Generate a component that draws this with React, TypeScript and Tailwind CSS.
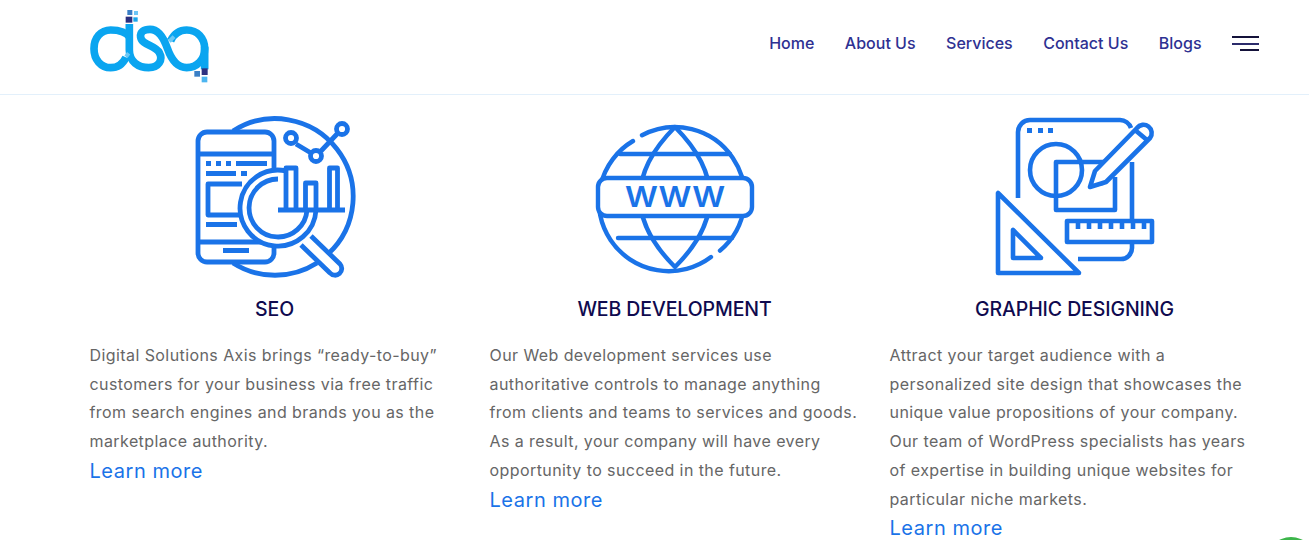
const navLinks = ["Home", "About Us", "Services", "Contact Us", "Blogs"];

const Logo = () => (
  <svg width="160" height="94" viewBox="0 0 480 282" fill="none">
    <g stroke="#0aa5f0" strokeWidth="23">
      <path d="M168 172C158 193 142 203 122 203C92 203 72 178 72 146C72 114 92 90 122 90C145 90 168 96 180 112" />
      <path d="M178 72V150C178 185 205 203 236 203C266 203 280 180 268 158C256 136 216 135 212 112C209 96 222 88 240 88C262 88 280 110 292 145C305 182 322 203 350 203C382 203 404 178 404 146C404 114 382 90 350 90C330 90 312 102 302 122" />
      <path d="M404 140V208" />
    </g>
    <path d="M298 124L312 110M168 170L176 160" stroke="#6cc8f5" strokeWidth="12" />
    <rect x="172" y="30" width="15" height="15" fill="#3a7fc6" />
    <rect x="192" y="33" width="12" height="12" fill="#6cc5f5" />
    <rect x="167" y="50" width="20" height="18" fill="#2b2f7f" />
    <rect x="190" y="52" width="13" height="13" fill="#1aa5ea" />
    <rect x="395" y="205" width="18" height="20" fill="#2e3180" />
    <rect x="373" y="213" width="17" height="17" fill="#3a7fc6" />
    <rect x="395" y="230" width="17" height="17" fill="#4db5f0" />
  </svg>
);

const SeoIcon = () => (
  <svg width="190" height="180" viewBox="0 0 190 180" fill="none" stroke="#1a73e8" strokeWidth="4.8" strokeLinejoin="round">
    <path d="M53 26A78 78 0 0 1 148 149M137 158A78 78 0 0 1 53 158" />
    <path d="M94 63V36A9 9 0 0 0 85 27H27A9 9 0 0 0 18 36V148A9 9 0 0 0 27 157H85A9 9 0 0 0 94 148V139" />
    <path d="M18 49H94M18 137H112" />
    <path d="M62 79H28V110H62" />
    <g fill="#1a73e8" stroke="none">
      <rect x="26" y="56" width="5" height="5" />
      <rect x="36" y="56" width="5" height="5" />
      <rect x="46" y="56" width="5" height="5" />
      <rect x="56" y="56" width="31" height="5" />
      <rect x="26" y="66" width="30" height="5" />
      <rect x="61" y="66" width="6" height="5" />
      <rect x="26" y="117" width="31" height="5" />
      <rect x="43" y="143" width="26" height="5" />
    </g>
    <path d="M106 65.9A38 38 0 1 0 136 105" fill="#fff" />
    <path d="M98 74A29 29 0 1 0 127 105" />
    <path d="M106 105V63H116V105M125.5 105V78H136V105M149.5 105V63H157.5V105" />
    <path d="M98 105H165" />
    <path d="M131 131L160 159A6.5 6.5 0 0 1 150 168L121 140" fill="#fff" />
    <path d="M116 39L131 48M141 46L157 29" />
    <circle cx="111" cy="33" r="5.5" fill="#fff" />
    <circle cx="136" cy="51" r="5.5" fill="#fff" />
    <circle cx="162" cy="24" r="5.5" fill="#fff" />
  </svg>
);

const WebIcon = () => (
  <svg width="190" height="180" viewBox="0 -5 190 180" fill="none" stroke="#1a73e8" strokeWidth="4.4" strokeLinecap="round" strokeLinejoin="round">
    <path d="M62 25.3A70 70 0 0 1 140 140.6M131 147A70 70 0 1 1 53 31" />
    <path d="M95 17Q25 87 95 157Q165 87 95 17Z" />
    <path d="M40 44H150M38 128H152" />
    <rect x="18" y="68" width="154" height="38" rx="9" fill="#fff" />
    <text x="45" y="97" textLength="100" lengthAdjust="spacingAndGlyphs" fill="#1a73e8" stroke="none" fontFamily="Inter, sans-serif" fontSize="28" fontWeight="600">WWW</text>
  </svg>
);

const DesignIcon = () => (
  <svg width="190" height="180" viewBox="0 0 190 180" fill="none" stroke="#1a73e8" strokeWidth="4.6" strokeLinejoin="round">
    <path d="M38 93V27A12 12 0 0 1 50 15H140A12 12 0 0 1 151 23M152 57V114M152 138V143A11 11 0 0 1 141 154H98" />
    <g fill="#1a73e8" stroke="none">
      <rect x="47" y="23" width="5" height="5" />
      <rect x="58" y="23" width="5" height="5" />
      <rect x="68" y="23" width="5" height="5" />
      <path d="M110 83L114 72L124 80Z" />
    </g>
    <circle cx="76" cy="65" r="26" />
    <path d="M128 57H76V105H135V72" />
    <path d="M110 82L115 66L157 23A8 8 0 0 1 170 33L126 77Z" fill="#fff" />
    <path d="M155 25L167 35" />
    <path d="M87 116H172V137H87ZM98 116V124M109 116V124M120 116V124M131 116V124M142 116V124M153 116V124M164 116V124" />
    <path d="M18 88V168H99Z" />
    <path d="M33 125V153H61Z" />
  </svg>
);

const services = [
  {
    title: "SEO",
    icon: <SeoIcon />,
    lines: [
      "Digital Solutions Axis brings “ready-to-buy”",
      "customers for your business via free traffic",
      "from search engines and brands you as the",
      "marketplace authority.",
    ],
  },
  {
    title: "WEB DEVELOPMENT",
    icon: <WebIcon />,
    lines: [
      "Our Web development services use",
      "authoritative controls to manage anything",
      "from clients and teams to services and goods.",
      "As a result, your company will have every",
      "opportunity to succeed in the future.",
    ],
  },
  {
    title: "GRAPHIC DESIGNING",
    icon: <DesignIcon />,
    lines: [
      "Attract your target audience with a",
      "personalized site design that showcases the",
      "unique value propositions of your company.",
      "Our team of WordPress specialists has years",
      "of expertise in building unique websites for",
      "particular niche markets.",
    ],
  },
];

export default function App() {
  return (
    <div className="relative h-[540px] overflow-hidden bg-white font-['Inter',sans-serif]">
      {/* Header */}
      <header className="flex h-[95px] items-center justify-between border-b border-[#e3f0fb] pl-[70px] pr-[50px]">
        <Logo />
        <div className="mb-[7px] flex items-center gap-[30.5px]">
          <nav className="flex items-center gap-[30.5px] pb-[2px]">
            {navLinks.map((link) => (
              <a key={link} className="text-[16px] font-medium text-[#2e3192]">
                {link}
              </a>
            ))}
          </nav>
          <div className="flex w-[27px] flex-col items-end gap-[4.5px]">
            <span className="h-[2px] w-full bg-[#14123a]" />
            <span className="h-[2px] w-full bg-[#2b2b6b]" />
            <span className="h-[2px] w-[19px] bg-[#14123a]" />
          </div>
        </div>
      </header>

      {/* Services */}
      <section className="flex pl-[74.5px] pt-[10px]">
        {services.map((service) => (
          <div key={service.title} className="flex w-[400px] flex-col px-[15px]">
            <div className="flex justify-center">{service.icon}</div>
            <h3 className="mt-[12px] text-center text-[19.5px] font-medium leading-[24px] tracking-[-0.1px] text-[#0f0a4f]">
              {service.title}
            </h3>
            <div className="mt-[20px] text-[16px] leading-[28.7px] tracking-[0.42px] text-[#666666]">
              {service.lines.map((line) => (
                <p key={line} className="whitespace-nowrap">
                  {line}
                </p>
              ))}
            </div>
            <a className="text-[20px] leading-[30px] tracking-[0.55px] text-[#1a73e8]">Learn more</a>
          </div>
        ))}
      </section>

      {/* Chat bubble */}
      <div className="absolute left-[1266px] top-[537px] h-[50px] w-[50px] rounded-full bg-[#3cb54a]" />
    </div>
  );
}
